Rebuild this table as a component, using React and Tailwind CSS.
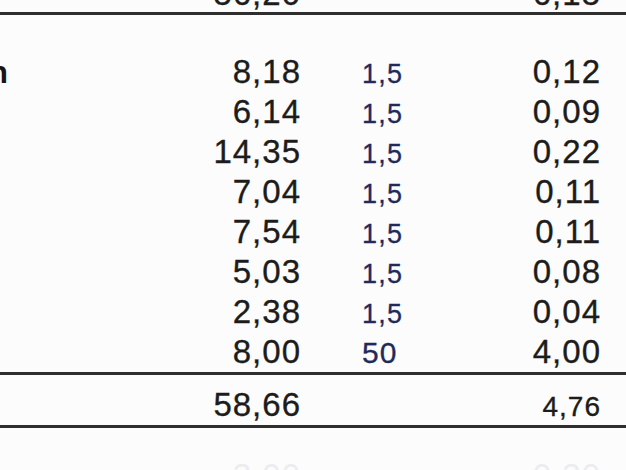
import React from "react";

const rows = [
  ["8,18", "1,5", "0,12"],
  ["6,14", "1,5", "0,09"],
  ["14,35", "1,5", "0,22"],
  ["7,04", "1,5", "0,11"],
  ["7,54", "1,5", "0,11"],
  ["5,03", "1,5", "0,08"],
  ["2,38", "1,5", "0,04"],
  ["8,00", "50", "4,00"],
];

const font = { fontFamily: '"Liberation Sans", Arial, sans-serif' };

const big = "text-[33px] tracking-[1px] text-[#1c1c1c] [-webkit-text-stroke:0.35px]";

function Row({ a, b, c, first }) {
  return (
    <div className="flex h-[40px] items-baseline leading-[40px]">
      <div className="flex w-[8px] shrink-0 justify-end overflow-hidden text-[31px] font-bold text-[#161616]">
        {first ? <span className="whitespace-nowrap">ion</span> : null}
      </div>
      <div className={"w-[293px] shrink-0 text-right " + big}>{a}</div>
      <div
        className={
          b === "50"
            ? "ml-[61px] w-[100px] shrink-0 text-[30px] tracking-[1px] text-[#222a5a] [-webkit-text-stroke:0.3px]"
            : "ml-[61px] w-[100px] shrink-0 text-[27px] tracking-[1.2px] text-[#222a5a] [-webkit-text-stroke:0.3px]"
        }
      >
        {b}
      </div>
      <div className={"w-[139px] shrink-0 text-right " + big}>{c}</div>
    </div>
  );
}

export default function App() {
  return (
    <div className="h-[470px] w-[626px] overflow-hidden bg-[#fcfcfd] antialiased" style={font}>
      <div className="flex h-[12px] items-end pb-[2px]">
        <div className="flex w-full items-baseline leading-[33px]">
          <div className={"w-[301px] shrink-0 text-right " + big}>56,20</div>
          <div className={"ml-[161px] w-[139px] shrink-0 text-right " + big}>6,15</div>
        </div>
      </div>
      <div className="h-[3px] w-full bg-[#2e2e2e]" />
      <div className="h-[37px]" />
      {rows.map((r, i) => (
        <Row key={i} a={r[0]} b={r[1]} c={r[2]} first={i === 0} />
      ))}
      <div className="h-[3px] w-full bg-[#2e2e2e]" />
      <div className="flex h-[50px] items-baseline pt-[10px] leading-[40px]">
        <div className={"w-[301px] shrink-0 text-right " + big}>58,66</div>
        <div className="ml-[161px] w-[139px] shrink-0 text-right text-[28px] tracking-[1px] text-[#1c1c1c] [-webkit-text-stroke:0.35px]">4,76</div>
      </div>
      <div className="h-[3px] w-full bg-[#2e2e2e]" />
      <div className="mt-[28px] flex items-baseline leading-[40px]">
        <div className="w-[301px] shrink-0 text-right text-[33px] tracking-[1px] text-[#ececf0]">3,00</div>
        <div className="ml-[161px] w-[139px] shrink-0 text-right text-[33px] tracking-[1px] text-[#ececf0]">0,30</div>
      </div>
    </div>
  );
}
